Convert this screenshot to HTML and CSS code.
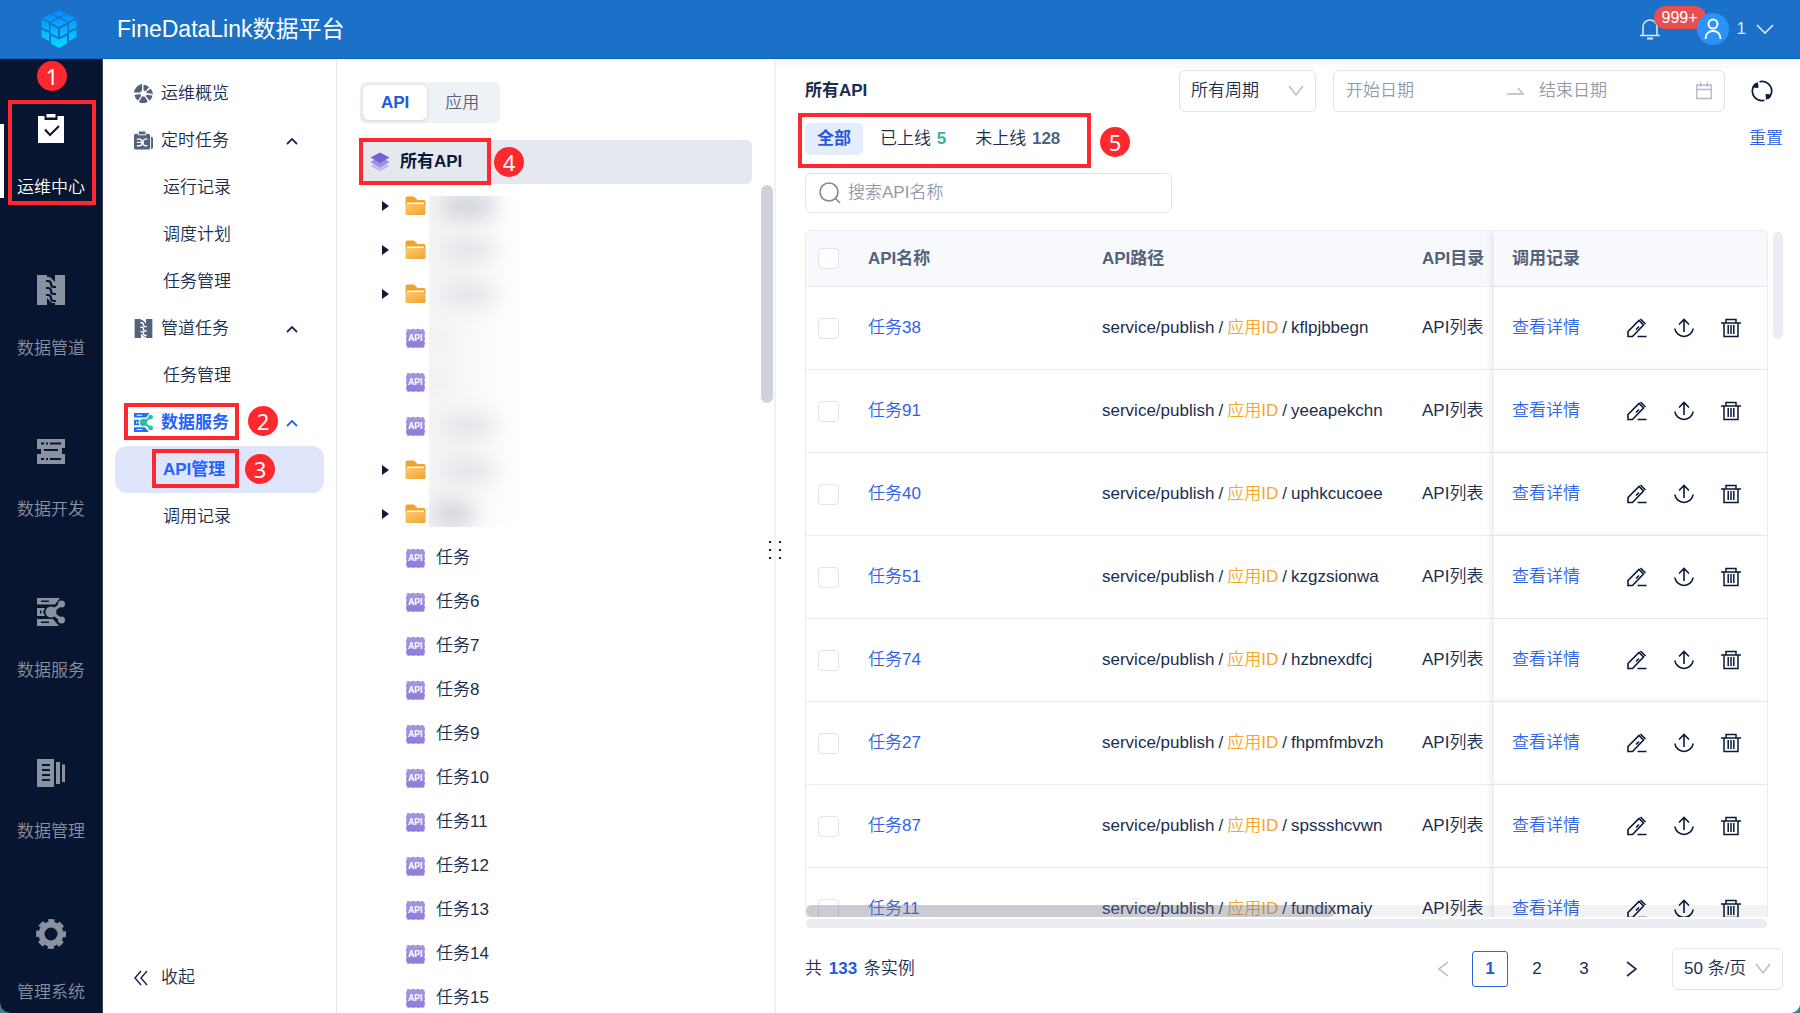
FILE: index.html
```html
<!doctype html>
<html lang="zh-CN">
<head>
    <meta charset="UTF-8">
    <meta name="viewport" content="width=device-width, initial-scale=1.0">
    <title>FineDataLink数据平台</title>
    <link rel="stylesheet" href="styles.css">
</head>
<body>

    <!-- icons -->
    <svg class="defs" width="0" height="0" aria-hidden="true">
        <defs>
            <linearGradient id="g-logo" x1="0" y1="0" x2="0" y2="38" gradientUnits="userSpaceOnUse">
                <stop offset="0" stop-color="#0a86ff"/><stop offset="1" stop-color="#00dcff"/>
            </linearGradient>
            <linearGradient id="g-folder" x1="0" y1="0" x2="1" y2="1">
                <stop offset="0" stop-color="#ffcb6e"/><stop offset="1" stop-color="#f0a22f"/>
            </linearGradient>
        </defs>
        <symbol id="i-folder" viewBox="0 0 21 20">
            <path d="M0.500 2a1.500 1.500 0 0 1 1.500-1.500h7l3.500 3.500h6.500a1.500 1.500 0 0 1 1.500 1.500V10H.5z" fill="#f3a32c"/>
            <path d="M2 6.500h17v4H2z" fill="#fff"/>
            <path d="M.5 8h20v9.500a1.500 1.500 0 0 1-1.500 1.500H2a1.500 1.500 0 0 1-1.500-1.500z" fill="url(#g-folder)"/>
        </symbol>
        <symbol id="i-edit" viewBox="0 0 20 20">
            <path d="M1 18.500V13.500L12 2.500l4.500 4.500L5.500 18.500zM13.500 1l5 5M10.500 18.500h9M9 11.500l3-3" fill="none" stroke="currentColor" stroke-width="1.600"/>
        </symbol>
        <symbol id="i-upload" viewBox="0 0 20 20">
            <path d="M10 14V1.500M5 6.500l5-5 5 5M.8 10.500a9.300 9.300 0 0 0 18.400 0" fill="none" stroke="currentColor" stroke-width="1.600"/>
        </symbol>
        <symbol id="i-trash" viewBox="0 0 20 20">
            <path d="M0 5h20M5 5V1.500h10V5M3 5v13.500h14V5M7.200 7v9M10 7v9M12.800 7v9" fill="none" stroke="currentColor" stroke-width="1.500"/>
        </symbol>
        <symbol id="i-up" viewBox="0 0 12 8">
            <path d="M1 7l5-5 5 5" fill="none" stroke="currentColor" stroke-width="1.800"/>
        </symbol>
        <symbol id="i-down" viewBox="0 0 16 12">
            <path d="M1 1l7 9 7-9" fill="none" stroke="currentColor" stroke-width="1.300"/>
        </symbol>
        <symbol id="i-pipe" viewBox="0 0 28 30">
            <path d="M0 0h10v2h3l5 5V0h10v30H18v-2h-3l-5-5v7H0z" fill="currentColor"/>
            <path d="M9 6h2q3 0 3 3t3 3h2M9 13h2q3 0 3 3t3 3h2M9 20h2q3 0 3 3t3 3h2" fill="none" class="cut" stroke-width="2.200"/>
        </symbol>
        <symbol id="i-service" viewBox="0 0 28 28">
            <path fill="currentColor" fill-rule="evenodd" d="M0 0h23l-5 6.500H0zM4 2.500v1.500h8V2.500zM0 10h8l-2 4 2 4H0zM3 12.500v3h1.500v-3zM0 21h16l6 7H0zM4 23.500V25h8v-1.500z"/>
            <path class="link-line" d="M14 14l10-7.500M14 14l10 7.500" fill="none" stroke-width="3"/>
            <circle class="link-dot" cx="14" cy="14" r="5.500"/>
            <circle class="link-dot" cx="24.500" cy="6" r="3.500"/>
            <circle class="link-dot" cx="24.500" cy="22" r="3.500"/>
        </symbol>
    </svg>

    <header class="topbar">
        <svg class="logo" width="36" height="38" viewBox="0 0 36 38" fill="url(#g-logo)">
            <path d="M18 0l7 3.500-7 3.500-7-3.500zM9.500 4.200L16.500 7.700 9 11.500 1.500 8zM26.500 4.200L34.500 8 27 11.500 19.500 7.700zM18 8.500l8 4-8 4.500-8-4.500zM.5 9.500L8 13v7.500L.5 17.500zM35.500 9.500L28 13v7.500l7.500-3zM9.500 14.500l7.500 4.500v8l-7.500-4zM26.500 14.500L19 19v8l7.500-4zM.5 19.500L8 23v8l-7.500-4zM35.500 19.500L28 23v8l7.500-4zM10 25.500l8 4 8-4v8L18 38l-8-4.500z"/>
        </svg>
        <h1>FineDataLink数据平台</h1>
        <button class="bell" aria-label="消息">
            <svg width="20" height="22" viewBox="0 0 20 22" fill="none" stroke="currentColor" stroke-width="1.600">
                <path d="M3 17V9a7 7 0 0 1 14 0v8M0 17.500h20"/><path d="M7 20.500h6" stroke-width="2"/>
            </svg>
            <span class="bell-count">999+</span>
        </button>
        <button class="user">
            <span class="avatar">
                <svg width="18" height="22" viewBox="0 0 18 22" fill="none" stroke="#fff" stroke-width="2">
                    <circle cx="9" cy="6" r="4.500"/><path d="M1.500 21c0-5 3-8 7.500-8s7.500 3 7.500 8"/>
                </svg>
            </span>
            1
            <svg width="18" height="11" viewBox="0 0 18 11" fill="none" stroke="currentColor" stroke-width="1.600"><path d="M1 1l8 8 8-8"/></svg>
        </button>
    </header>

    <div class="layout">

        <nav class="rail">
            <a href="#" class="rail-item active">
                <svg width="28" height="30" viewBox="0 0 28 30">
                    <path d="M1 2h26v27H1z" fill="#fff"/><path d="M7.500 0h13v6h-13z" fill="#081530"/><path d="M9.500 0h9v3.500h-9z" fill="#fff"/>
                    <path d="M8 15.500l5 5.500 9-9" fill="none" stroke="#081530" stroke-width="2"/>
                </svg>
                <span>运维中心</span>
                <i class="mark mark-rail"></i><b class="num num-rail">1</b>
            </a>
            <a href="#" class="rail-item">
                <svg width="28" height="30"><use href="#i-pipe"/></svg>
                <span>数据管道</span>
            </a>
            <a href="#" class="rail-item">
                <svg width="28" height="30" viewBox="0 0 28 30">
                    <path fill="currentColor" fill-rule="evenodd" d="M0 3h28v9h-3v6h3v10H0V18h4v-5H0zM4 6.500v2h3v-2zM9 6.500v2h2v-2zM13 6.500v2h11v-2zM7 13v2h14v-2zM4 22v2h3v-2zM9 22v2h2v-2zM13 22v2h11v-2z"/>
                </svg>
                <span>数据开发</span>
            </a>
            <a href="#" class="rail-item">
                <svg width="28" height="30"><use href="#i-service"/></svg>
                <span>数据服务</span>
            </a>
            <a href="#" class="rail-item">
                <svg width="28" height="30" viewBox="0 0 28 30" fill="currentColor">
                    <path fill-rule="evenodd" d="M0 1h17v28H0zM5 6v2h8V6zM5 11v2h8v-2zM5 16v2h8v-2zM5 21v2h8v-2z"/>
                    <path d="M19 4h4v22h-4zM25 6.500h3.500V24H25z"/>
                </svg>
                <span>数据管理</span>
            </a>
            <a href="#" class="rail-item">
                <svg width="30" height="30" viewBox="0 0 30 30">
                    <circle cx="15" cy="15" r="9.500" fill="none" stroke="currentColor" stroke-width="6"/>
                    <circle cx="15" cy="15" r="13" fill="none" stroke="currentColor" stroke-width="4" stroke-dasharray="6.200 4.010" stroke-dashoffset="3.100"/>
                </svg>
                <span>管理系统</span>
            </a>
        </nav>

        <aside class="sidebar">
            <a href="#" class="menu-item">
                <svg width="19" height="19" viewBox="0 0 20 20">
                    <path fill="currentColor" d="M0 9A10 10 0 0 1 8.500 0V6.500L6.500 9zM10 0.500a10 10 0 0 1 6 3L12 7.500 10 6.500zM17.500 5a9 9 0 0 1 2.500 5.500L13.500 9.500 13 8zM19.500 12a9 9 0 0 1-3 5.500L12.500 13l.8-1.800zM14.500 18.500a9 9 0 0 1-9.500.5L8.500 13l3 .5zM4 17.500A9 9 0 0 1 .5 11.500L6.500 10.500l1 1.800z"/>
                </svg>
                运维概览
            </a>
            <a href="#" class="menu-item">
                <svg width="19" height="19" viewBox="0 0 20 20">
                    <path d="M2 3h13a2 2 0 0 1 2 2v12.500a2 2 0 0 1-2 2H2a2 2 0 0 1-2-2V5a2 2 0 0 1 2-2zM18 6q2 0 2 2v9q0 2-2 2z" fill="currentColor"/>
                    <path d="M4.500 0h8v4h-8z" fill="currentColor" stroke="#fff"/>
                    <path d="M3 8.500h3c2.500 0 2.500 3.500 2.500 3.500s0 3.500-2.500 3.500H3M3 12h5M14 8.500h-2c-2.500 0-2.500 3.500-2.500 3.500s0 3.500 2.500 3.500h2" fill="none" stroke="#fff" stroke-width="1.400"/>
                </svg>
                定时任务
                <svg class="chev" width="12" height="8"><use href="#i-up"/></svg>
            </a>
            <a href="#" class="menu-item child">运行记录</a>
            <a href="#" class="menu-item child">调度计划</a>
            <a href="#" class="menu-item child">任务管理</a>
            <a href="#" class="menu-item">
                <svg width="19" height="19"><use href="#i-pipe"/></svg>
                管道任务
                <svg class="chev" width="12" height="8"><use href="#i-up"/></svg>
            </a>
            <a href="#" class="menu-item child">任务管理</a>
            <a href="#" class="menu-item open">
                <svg class="service-color" width="19" height="19"><use href="#i-service"/></svg>
                数据服务
                <svg class="chev" width="12" height="8"><use href="#i-up"/></svg>
                <i class="mark mark-open"></i><b class="num num-open">2</b>
            </a>
            <a href="#" class="menu-item child selected">API管理
                <i class="mark mark-child"></i><b class="num num-child">3</b>
            </a>
            <a href="#" class="menu-item child">调用记录</a>
            <button class="collapse">
                <svg width="14" height="16" viewBox="0 0 14 16" fill="none" stroke="currentColor" stroke-width="1.500"><path d="M7 1L1 8l6 7M13 1L7 8l6 7"/></svg>
                收起
            </button>
        </aside>

        <section class="tree-panel">
            <div class="switch">
                <button class="on">API</button>
                <button>应用</button>
            </div>
            <div class="tree-root">
                <svg width="20" height="20" viewBox="0 0 20 20">
                    <path d="M10 9l9.500 5-9.500 5.500L.5 14z" fill="#c5bbf3"/>
                    <path d="M10 5l9.500 5-9.500 5.500L.5 10z" fill="#9d8de3"/>
                    <path d="M10 .5L19.500 5.500 10 11 .5 5.500z" fill="#7460cf"/>
                </svg>
                所有API
                <i class="mark mark-root"></i><b class="num num-root">4</b>
            </div>
            <div class="tree-body">
                <ul id="tree"></ul>
                <div class="redacted">
                    <i></i><i></i><i></i><i></i><i></i><i></i><i></i><i></i>
                </div>
                <div class="tree-scroll"></div>
            </div>
            <div class="grip"><i></i><i></i><i></i><i></i><i></i><i></i></div>
        </section>

        <main class="content">
            <div class="head">
                <h2>所有API</h2>
                <div class="select-box">
                    <select aria-label="周期"><option>所有周期</option></select>
                    <svg width="16" height="12"><use href="#i-down"/></svg>
                </div>
                <div class="range">
                    <input type="text" placeholder="开始日期" aria-label="开始日期">
                    <svg width="18" height="10" viewBox="0 0 18 10" fill="none" stroke="currentColor" stroke-width="1.400"><path d="M0 8h16L11 2"/></svg>
                    <input type="text" placeholder="结束日期" aria-label="结束日期">
                    <svg width="16" height="18" viewBox="0 0 16 18" fill="none" stroke="currentColor" stroke-width="1.300"><path d="M.7 3h14.600v13.500H.7zM.7 7.500h14.600M4.500 0v5M11.500 0v5"/></svg>
                </div>
                <button class="refresh" aria-label="刷新">
                    <svg width="22" height="22" viewBox="0 0 22 22" fill="none" stroke="currentColor" stroke-width="1.700">
                        <path d="M6.500 19.500A9.600 9.600 0 0 1 5 3.500M8.500 1.700A9.600 9.600 0 0 1 17 18.500M13.500 20.300A9.600 9.600 0 0 1 6.500 19.500"/>
                        <path d="M2.500 7l4-4.500.5 5zM19.500 15l-4 4.500-.5-5z" fill="currentColor" stroke-width="1"/>
                    </svg>
                </button>
            </div>

            <div class="filters">
                <button class="on">全部</button>
                <button>已上线 <b class="online">5</b></button>
                <button>未上线 <b class="offline">128</b></button>
                <a href="#" class="reset">重置</a>
                <i class="mark mark-filters"></i><b class="num num-filters">5</b>
            </div>

            <label class="search">
                <svg width="22" height="22" viewBox="0 0 22 22" fill="none" stroke="currentColor" stroke-width="1.600"><circle cx="10" cy="10" r="9"/><path d="M16.500 16.500l4.500 4.500"/></svg>
                <input type="text" placeholder="搜索API名称">
            </label>

            <div class="table-area">
                <div class="table-wrap">
                    <table>
                        <thead>
                            <tr>
                                <th class="col-check"><input type="checkbox" aria-label="全选"></th>
                                <th class="col-name">API名称</th>
                                <th>API路径</th>
                                <th class="col-dir">API目录</th>
                                <th class="col-fixed">调用记录</th>
                            </tr>
                        </thead>
                        <tbody id="rows"></tbody>
                    </table>
                    <div class="inner-scroll"><i></i></div>
                </div>
                <div class="v-scroll"></div>
            </div>
            <div class="h-scroll"></div>

            <footer class="foot">
                <span class="total">共 <b>133</b> 条实例</span>
                <div class="pages">
                    <button class="off" aria-label="上一页"><svg width="11" height="16" viewBox="0 0 11 16" fill="none" stroke="currentColor" stroke-width="1.500"><path d="M10 1L1 8l9 7"/></svg></button>
                    <button class="on">1</button>
                    <button>2</button>
                    <button>3</button>
                    <button aria-label="下一页"><svg width="11" height="16" viewBox="0 0 11 16" fill="none" stroke="currentColor" stroke-width="1.700"><path d="M1 1l9 7-9 7"/></svg></button>
                </div>
                <div class="select-box size-box">
                    <select aria-label="每页条数"><option>50 条/页</option></select>
                    <svg width="16" height="12"><use href="#i-down"/></svg>
                </div>
            </footer>
        </main>
    </div>

    <script>
        // tree: "f" - folder, "a" - api, names are hidden for the first ones
        let nodes = ["f", "f", "f", "a", "a", "a", "f", "f"];
        let names = ["任务", "任务6", "任务7", "任务8", "任务9", "任务10", "任务11", "任务12", "任务13", "任务14", "任务15"];
        let apiIcon = '<span class="arrow none"></span><span class="api-icon">API</span>';
        let tree = "";
        for (let i = 0; i < nodes.length; i++) {
            tree += nodes[i] === "f"
                ? '<li><span class="arrow"></span><svg width="21" height="20"><use href="#i-folder"/></svg></li>'
                : '<li>' + apiIcon + '</li>';
        }
        for (let i = 0; i < names.length; i++) {
            tree += '<li>' + apiIcon + names[i] + '</li>';
        }
        document.getElementById("tree").innerHTML = tree;

        // table
        let data = [
            ["任务38", "kflpjbbegn"],
            ["任务91", "yeeapekchn"],
            ["任务40", "uphkcucoee"],
            ["任务51", "kzgzsionwa"],
            ["任务74", "hzbnexdfcj"],
            ["任务27", "fhpmfmbvzh"],
            ["任务87", "spssshcvwn"],
            ["任务11", "fundixmaiy"]
        ];
        let rows = "";
        for (let i = 0; i < data.length; i++) {
            rows += '<tr>'
                + '<td><input type="checkbox" aria-label="' + data[i][0] + '"></td>'
                + '<td><a href="#">' + data[i][0] + '</a></td>'
                + '<td><span class="path"><span>service/publish</span><span>/</span><span class="app-id">应用ID</span><span>/</span><span>' + data[i][1] + '</span></span></td>'
                + '<td>API列表</td>'
                + '<td class="col-fixed"><div class="actions"><a href="#">查看详情</a>'
                + '<button aria-label="编辑"><svg width="20" height="20"><use href="#i-edit"/></svg></button>'
                + '<button aria-label="上线"><svg width="20" height="20"><use href="#i-upload"/></svg></button>'
                + '<button aria-label="删除"><svg width="20" height="20"><use href="#i-trash"/></svg></button>'
                + '</div></td></tr>';
        }
        document.getElementById("rows").innerHTML = rows;
    </script>
</body>
</html>
```
FILE: styles.css
```css
* {
    box-sizing: border-box;
}
html {
    background: #3d7f86;
}
body {
    margin: 0;
    height: 100vh;
    display: flex;
    flex-direction: column;
    overflow: hidden;
    border-radius: 0 0 10px 10px;
    background: #fff;
    color: #1b2d4d;
    font: 350 17px/24px "Liberation Sans", "Noto Sans CJK SC", sans-serif;
}
h1, h2, ul {
    margin: 0;
    padding: 0;
}
a {
    color: #2f62e8;
    text-decoration: none;
}
b {
    font-weight: 700;
}
button, input, select {
    font: inherit;
    color: inherit;
    border: none;
    background: none;
    padding: 0;
    margin: 0;
}
button {
    cursor: pointer;
}
svg {
    flex: none;
    display: block;
}
.defs {
    position: absolute;
}
.cut {
    stroke: var(--cut);
}
.link-dot {
    fill: var(--link, currentColor);
}
.link-line {
    stroke: var(--link, currentColor);
}

/* header */
.topbar {
    height: 59px;
    flex: none;
    display: flex;
    align-items: center;
    padding: 0 26px 0 41px;
    background: #1a71c7;
    border-bottom: 1px solid #0a62bd;
    color: #d9e9fb;
}
.topbar h1 {
    flex: 1;
    margin-left: 40px;
    font-size: 23px;
    font-weight: 400;
    color: #fff;
}
.bell {
    position: relative;
    margin-right: 37px;
}
.bell-count {
    position: absolute;
    left: 14px;
    top: -12px;
    width: 52px;
    height: 23px;
    border-radius: 12px;
    background: #e84f4f;
    color: #fff;
    font-size: 16px;
    line-height: 23px;
}
.user {
    display: flex;
    align-items: center;
    gap: 8px;
    position: relative;
}
.user > svg {
    margin-left: 2px;
}
.avatar {
    width: 32px;
    height: 32px;
    border-radius: 50%;
    background: #2b92f7;
    display: flex;
    align-items: center;
    justify-content: center;
}

.layout {
    flex: 1;
    min-height: 0;
    display: flex;
}

/* left rail */
.rail {
    --cut: #081530;
    width: 103px;
    flex: none;
    overflow: hidden;
    background: #081530;
    border-right: 1px solid #39445a;
}
.rail-item {
    position: relative;
    height: 161px;
    padding-top: 55px;
    display: flex;
    flex-direction: column;
    align-items: center;
    gap: 32px;
    color: #8a91a1;
}
.rail-item.active {
    color: #fff;
}
.rail-item.active::before {
    content: "";
    position: absolute;
    left: 0;
    top: 65px;
    width: 4px;
    height: 74px;
    background: #fff;
}

/* menu */
.sidebar {
    --cut: #fff;
    width: 234px;
    flex: none;
    display: flex;
    flex-direction: column;
    padding: 11px 12px;
    border-right: 1px solid #e6e9f0;
}
.menu-item {
    position: relative;
    height: 47px;
    flex: none;
    display: flex;
    align-items: center;
    gap: 8px;
    padding: 0 26px 0 19px;
    border-radius: 12px;
    color: #1b2d4d;
}
.menu-item > svg:first-child {
    color: #54637c;
}
.menu-item .chev {
    margin-left: auto;
    color: #1b2d4d;
}
.menu-item.child {
    padding-left: 48px;
}
.menu-item.open, .menu-item.selected {
    color: #2563fb;
    font-weight: 700;
}
.menu-item.open .chev {
    color: #2563fb;
}
.menu-item.selected {
    background: #dfe5fa;
}
.menu-item .service-color:first-child {
    --link: #22c3a6;
    color: #2470f5;
}
.collapse {
    margin-top: auto;
    margin-bottom: 12px;
    padding-left: 19px;
    display: flex;
    align-items: center;
    gap: 13px;
}

/* tree */
.tree-panel {
    position: relative;
    width: 439px;
    flex: none;
    display: flex;
    flex-direction: column;
    padding: 23px 0 0 23px;
    border-right: 2px solid #f0f1f8;
}
.switch {
    width: fit-content;
    display: flex;
    padding: 3px;
    border-radius: 6px;
    background: #eef1f6;
}
.switch button {
    height: 35px;
    padding: 0 18px;
    color: #54637c;
    border-radius: 6px;
}
.switch .on {
    background: #fff;
    color: #2459e0;
    font-weight: 700;
    box-shadow: 0 1px 4px rgba(40, 60, 110, 0.15);
}
.tree-root {
    position: relative;
    height: 44px;
    margin: 17px 22px 0 0;
    padding-left: 10px;
    display: flex;
    align-items: center;
    gap: 10px;
    border-radius: 6px;
    background: #e6e8ef;
    color: #081a3c;
    font-weight: 700;
}
.tree-body {
    position: relative;
    flex: 1;
    min-height: 0;
    overflow: hidden;
}
.tree-body li {
    height: 44px;
    display: flex;
    align-items: center;
    padding-left: 22px;
}
.api-icon {
    width: 19px;
    height: 19px;
    margin: 0 11px 0 1px;
    border: 1px dashed #c9bff0;
    border-radius: 3px;
    background: linear-gradient(#a695e3, #8c7bda);
    color: #fff;
    font: bold 9px/17px Roboto, sans-serif;
    display: flex;
    justify-content: center;
}
.arrow {
    width: 7px;
    margin-right: 16px;
    border: 5px solid transparent;
    border-left: 7px solid #081a3c;
    border-right: 0;
}
.arrow.none {
    border-color: transparent;
}
.redacted {
    position: absolute;
    left: 69px;
    top: 12px;
    width: 92px;
    height: 331px;
    overflow: hidden;
    background: linear-gradient(to right, #f5f5f6, #fff);
}
.redacted i {
    display: block;
    width: 54px;
    height: 20px;
    margin: 0 0 24px 12px;
    border-radius: 10px;
    background: #dddfe4;
    filter: blur(11px);
}
.redacted i:nth-child(1) {
    background: #c3c8d0;
}
.redacted i:nth-child(4), .redacted i:nth-child(5) {
    width: 20px;
    margin-left: 4px;
    background: #e8eaed;
}
.redacted i:nth-child(8) {
    width: 40px;
    margin-left: 4px;
    background: #c3c8d0;
}
.tree-scroll {
    position: absolute;
    right: 1px;
    top: 1px;
    width: 12px;
    height: 218px;
    border-radius: 6px;
    background: #cfd2da;
}
.grip {
    position: absolute;
    right: -7px;
    top: 482px;
    display: grid;
    grid-template-columns: 2px 2px;
    gap: 6px 8px;
}
.grip i {
    height: 2px;
    background: #081a3c;
}

/* content */
.content {
    flex: 1;
    min-width: 0;
    display: flex;
    flex-direction: column;
    padding: 11px 17px 23px 29px;
    background: linear-gradient(#f6f8fa, #fff 12px);
}
.head {
    display: flex;
    align-items: center;
    height: 42px;
}
.head h2 {
    flex: 1;
    font-size: 17px;
}
.select-box {
    position: relative;
    width: 137px;
    height: 42px;
}
.select-box select {
    width: 100%;
    height: 100%;
    padding: 0 11px;
    border: 1px solid #dfe3ec;
    border-radius: 6px;
    background: #fff;
    appearance: none;
}
.select-box svg {
    position: absolute;
    right: 12px;
    top: 15px;
    color: #b3bac6;
    pointer-events: none;
}
.range {
    width: 392px;
    height: 42px;
    margin: 0 26px 0 17px;
    padding: 0 12px;
    display: flex;
    align-items: center;
    border: 1px solid #dfe3ec;
    border-radius: 6px;
    background: #fff;
    color: #b3bac6;
}
.range input {
    flex: 1;
    min-width: 0;
}
.range input:first-child {
    flex-grow: 1;
    margin-right: 4px;
}
.range input:nth-of-type(2) {
    margin-left: 14px;
}
::placeholder {
    color: #929baa;
    opacity: 1;
}
.refresh {
    margin-right: 10px;
    color: #081a3c;
}
.filters {
    position: relative;
    display: flex;
    margin-top: 11px;
}
.filters button {
    height: 32px;
    margin-right: 5px;
    padding: 0 12px;
    border-radius: 5px;
}
.filters .on {
    background: #e4edfd;
    color: #2459e0;
    font-weight: 700;
}
.online, .offline {
    margin-left: 1px;
}
.online {
    color: #35b39c;
}
.offline {
    color: #54637c;
}
.reset {
    margin-left: auto;
    line-height: 32px;
}
.search {
    width: 367px;
    height: 40px;
    margin-top: 18px;
    padding: 0 13px;
    display: flex;
    align-items: center;
    gap: 7px;
    border: 1px solid #dfe3ec;
    border-radius: 6px;
    color: #7c8798;
}
.search input {
    flex: 1;
}

/* table */
.table-area {
    flex: 1;
    min-height: 0;
    margin-top: 17px;
    display: flex;
    gap: 5px;
}
.table-wrap {
    position: relative;
    flex: 1;
    overflow: hidden;
    border: solid #e9ecf3;
    border-width: 1px 1px 0;
    border-radius: 6px 6px 0 0;
}
table {
    width: 100%;
    table-layout: fixed;
    border-collapse: separate;
    border-spacing: 0;
}
th, td {
    padding: 0;
    text-align: left;
    border-bottom: 1px solid #e9ecf3;
}
th {
    height: 56px;
    background: #f8f9fd;
    color: #54637c;
}
td {
    height: 83px;
}
.col-check {
    width: 62px;
}
.col-name {
    width: 234px;
}
.col-dir {
    width: 72px;
}
.col-fixed {
    width: 273px;
    padding-left: 18px;
    background: #fff;
    box-shadow: -4px 0 6px rgba(20, 30, 60, 0.07);
}
th.col-fixed {
    background: #f8f9fd;
}
input[type=checkbox] {
    appearance: none;
    display: block;
    width: 21px;
    height: 21px;
    margin-left: 12px;
    border: 1px solid #dfe3ec;
    border-radius: 4px;
    background: #fff;
}
.path {
    display: flex;
    gap: 4px;
}
.app-id {
    color: #f3a52c;
}
.actions {
    display: flex;
    align-items: center;
    gap: 27px;
    color: #081a3c;
}
.actions a {
    margin-right: 20px;
}
.inner-scroll {
    position: absolute;
    left: 0;
    right: 0;
    bottom: 0;
    height: 12px;
    background: rgba(0, 0, 0, 0.05);
}
.inner-scroll i {
    display: block;
    width: 55%;
    height: 12px;
    border-radius: 6px;
    background: rgba(120, 128, 145, 0.33);
}
.v-scroll {
    width: 10px;
    height: 107px;
    margin-top: 2px;
    border-radius: 5px;
    background: #ecedf2;
}
.h-scroll {
    height: 9px;
    margin: 2px 16px 20px 1px;
    border-radius: 5px;
    background: #ecedf2;
}

/* footer */
.foot {
    display: flex;
    align-items: center;
    height: 42px;
}
.total {
    flex: 1;
}
.total b {
    margin: 0 2px;
    color: #2459e0;
}
.pages {
    display: flex;
    gap: 11px;
    margin-right: 23px;
}
.pages button {
    width: 36px;
    height: 36px;
    display: flex;
    align-items: center;
    justify-content: center;
    border-radius: 3px;
}
.pages .on {
    border: 1px solid #2f62e8;
    color: #2459e0;
    font-weight: 700;
}
.pages .off {
    color: #b3bac6;
}
.size-box {
    width: 111px;
}

/* step marks */
.mark {
    position: absolute;
    border: 4px solid #fe282e;
    pointer-events: none;
}
.num {
    position: absolute;
    width: 30px;
    height: 30px;
    border-radius: 50%;
    background: #fe282e;
    color: #fff;
    font: 400 22px/30px "Noto Sans", sans-serif;
    text-align: center;
}
.mark-rail {
    left: 8px;
    top: 41px;
    width: 88px;
    height: 105px;
}
.num-rail {
    left: 37px;
    top: 2px;
}
.mark-open {
    left: 9px;
    top: 4px;
    width: 115px;
    height: 37px;
}
.num-open {
    left: 133px;
    top: 7px;
}
.mark-child {
    left: 37px;
    top: 3px;
    width: 87px;
    height: 39px;
}
.num-child {
    left: 130px;
    top: 8px;
}
.mark-root {
    left: -1px;
    top: -2px;
    width: 132px;
    height: 47px;
}
.num-root {
    left: 134px;
    top: 7px;
}
.mark-filters {
    left: -7px;
    top: -10px;
    width: 293px;
    height: 55px;
}
.num-filters {
    left: 295px;
    top: 4px;
}
```
